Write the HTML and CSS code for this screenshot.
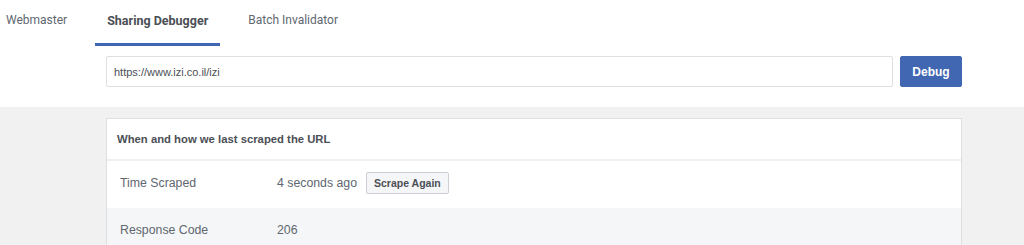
FILE: index.html
```html
<!DOCTYPE html>
<html lang="en">

<head>
    <meta charset="UTF-8">
    <meta name="viewport" content="width=device-width, initial-scale=1.0">
    <title>Sharing Debugger</title>
    <link rel="stylesheet" href="styles.css">
</head>

<body>
    <div class="top">
        <nav class="tabs">
            <a href="#webmaster" class="tab first">Webmaster</a>
            <a href="#debugger" class="tab active">Sharing Debugger</a>
            <a href="#batch" class="tab">Batch Invalidator</a>
        </nav>

        <form class="debug-form">
            <input type="text" class="url-input" value="https://www.izi.co.il/izi">
            <button type="button" class="debug-btn">Debug</button>
        </form>
    </div>

    <main class="content">
        <section class="card">
            <h3 class="card-title">When and how we last scraped the URL</h3>
            <div class="row">
                <div class="label">Time Scraped</div>
                <div class="value">4 seconds ago <button type="button" class="scrape-btn">Scrape Again</button></div>
            </div>
            <div class="row alt">
                <div class="label">Response Code</div>
                <div class="value">206</div>
            </div>
        </section>
    </main>
</body>

</html>
```

FILE: styles.css
```css
body {
    margin: 0;
    font-family: "Liberation Sans", Arial, sans-serif;
    background-color: #f1f1f1;
    height: 245px;
    overflow: hidden;
}

.top {
    background-color: #fff;
    height: 107px;
}

.tabs {
    display: flex;
    gap: 16px;
    height: 46px;
}

.tab {
    font-family: Roboto, sans-serif;
    font-size: 12px;
    color: #606770;
    text-decoration: none;
    padding: 0 12px;
    height: 43px;
    line-height: 41px;
    border-bottom: 3px solid transparent;
}

.tab.first {
    margin-left: -6px;
}

.tab.active {
    font-weight: bold;
    font-size: 12.5px;
    color: #4b4f56;
    border-bottom-color: #4267b2;
}

.debug-form {
    display: flex;
    gap: 7px;
    width: 856px;
    margin: 10px 0 0 106px;
}

.url-input {
    flex: 1;
    height: 31px;
    box-sizing: border-box;
    border: 1px solid #dddfe2;
    border-radius: 2px;
    padding: 0 7px;
    font-family: "Liberation Sans", Arial, sans-serif;
    font-size: 11px;
    color: #4b4f56;
}

.debug-btn {
    width: 62px;
    height: 31px;
    border: 1px solid #4267b2;
    border-radius: 2px;
    background-color: #4267b2;
    color: #fff;
    font-family: "Liberation Sans", Arial, sans-serif;
    font-weight: bold;
    font-size: 12px;
}

.content {
    padding-top: 11px;
}

.card {
    width: 856px;
    box-sizing: border-box;
    margin-left: 106px;
    background-color: #fff;
    border: 1px solid #dddfe2;
}

.card-title {
    margin: 0;
    height: 40px;
    line-height: 40px;
    padding: 0 10px;
    font-size: 11.3px;
    color: #4b4f56;
    border-bottom: 2px solid #eeeff1;
}

.row {
    display: flex;
    align-items: center;
    box-sizing: border-box;
    height: 47px;
    padding: 0 13px 3px;
    font-size: 12.3px;
    color: #606770;
}

.row.alt {
    background-color: #f5f6f7;
}

.label {
    width: 157px;
}

.value {
    display: flex;
    align-items: center;
    gap: 9px;
}

.scrape-btn {
    height: 22px;
    padding: 0 7px;
    border: 1px solid #ccd0d5;
    border-radius: 2px;
    background-color: #f5f6f7;
    color: #4b4f56;
    font-family: "Liberation Sans", Arial, sans-serif;
    font-weight: bold;
    font-size: 10.5px;
}
```
